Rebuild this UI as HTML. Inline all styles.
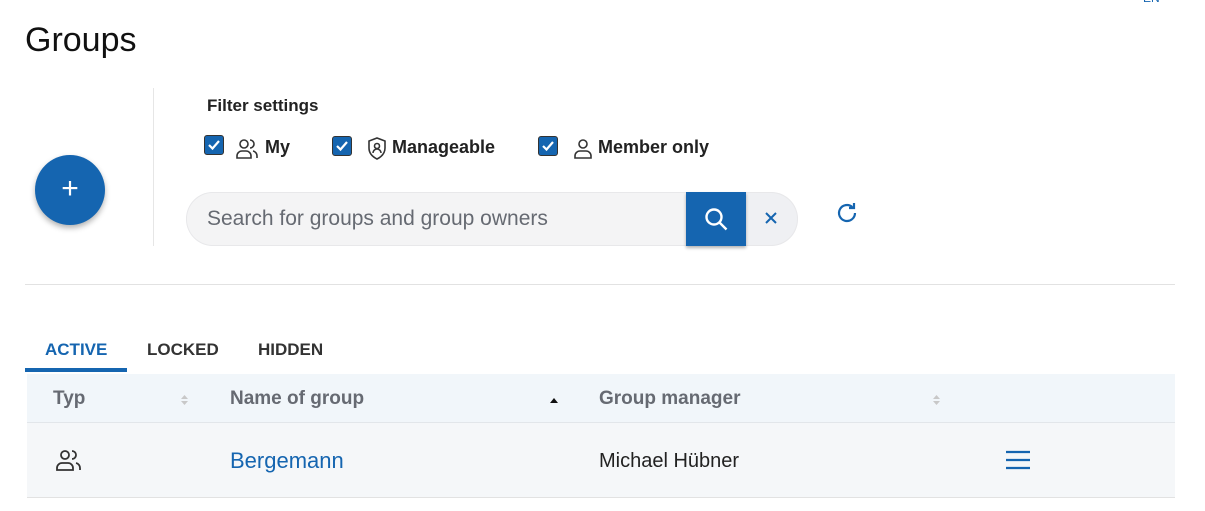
<!DOCTYPE html>
<html><head><meta charset="utf-8"><style>
body{margin:0;width:1205px;height:511px;background:#fff;font-family:"Liberation Sans",sans-serif;position:relative;overflow:hidden;color:#222}
.a{position:absolute}
.cb{position:absolute;width:20px;height:20px;background:#1565b0;border:1px solid #333;border-radius:3px;box-sizing:border-box}
.lbl{position:absolute;font-size:18px;font-weight:bold;color:#222;top:137px}
</style></head><body>
<div class="a" style="left:1143px;top:-9px;font-size:12px;color:#1565b0">EN</div>
<div class="a" style="left:25px;top:21px;font-size:34px;color:#111">Groups</div>
<div class="a" style="left:153px;top:88px;width:1px;height:158px;background:#e6e6e6"></div>
<div class="a" style="left:35px;top:155px;width:70px;height:70px;border-radius:50%;background:#1565b0;box-shadow:0 3px 6px rgba(0,0,0,.3);color:#fff;font-size:30px;text-align:center;line-height:68px">+</div>
<div class="a" style="left:207px;top:96px;font-size:17px;font-weight:bold">Filter settings</div>
<div class="cb" style="left:204px;top:135px"><svg width="18" height="18" viewBox="0 0 18 18"><path d="M4 9l3.5 3.5L14 5" stroke="#fff" stroke-width="2.2" fill="none"/></svg></div>
<svg class="a" style="left:235px;top:138px" width="26" height="22" viewBox="0 0 26 22" fill="none" stroke="#333" stroke-width="1.6"><circle cx="9" cy="6" r="4"/><path d="M2 20v-2a5 5 0 015-5h4a5 5 0 015 5v2zM15 2a4 4 0 010 8M18 13a5 5 0 014 5v2"/></svg>
<div class="lbl" style="left:265px">My</div>
<div class="cb" style="left:332px;top:136px"><svg width="18" height="18" viewBox="0 0 18 18"><path d="M4 9l3.5 3.5L14 5" stroke="#fff" stroke-width="2.2" fill="none"/></svg></div>
<svg class="a" style="left:367px;top:136px" width="20" height="26" viewBox="0 0 20 26" fill="none" stroke="#333" stroke-width="1.6"><path d="M10 2l8 3v7c0 6-4 9-8 11-4-2-8-5-8-11V5z"/><circle cx="10" cy="10" r="2.5"/><path d="M6 17a4 4 0 018 0"/></svg>
<div class="lbl" style="left:392px">Manageable</div>
<div class="cb" style="left:538px;top:136px"><svg width="18" height="18" viewBox="0 0 18 18"><path d="M4 9l3.5 3.5L14 5" stroke="#fff" stroke-width="2.2" fill="none"/></svg></div>
<svg class="a" style="left:572px;top:138px" width="22" height="22" viewBox="0 0 22 22" fill="none" stroke="#333" stroke-width="1.6"><circle cx="11" cy="6" r="4"/><path d="M3 20v-2a5 5 0 015-5h6a5 5 0 015 5v2z"/></svg>
<div class="lbl" style="left:598px">Member only</div>
<div class="a" style="left:186px;top:192px;width:612px;height:54px;border-radius:27px;background:#eff0f3;box-shadow:inset 0 0 0 1px #e8e8ea"></div>
<div class="a" style="left:187px;top:193px;width:500px;height:52px;border-radius:26px 0 0 26px;background:#f4f4f5"></div>
<div class="a" style="left:207px;top:207px;font-size:21px;color:#666a72">Search for groups and group owners</div>
<div class="a" style="left:686px;top:192px;width:60px;height:54px;background:#1565b0;box-shadow:0 2px 3px rgba(0,0,0,.3)"><svg style="margin:15px 0 0 18px" width="26" height="26" viewBox="0 0 26 26" fill="none" stroke="#fff" stroke-width="2.4"><circle cx="10" cy="10" r="7.5"/><path d="M15.5 15.5l7 7"/></svg></div>
<svg class="a" style="left:764px;top:211px" width="14" height="14" viewBox="0 0 14 14" stroke="#1565b0" stroke-width="2"><path d="M2 2l10 10M12 2L2 12"/></svg>
<svg class="a" style="left:835px;top:201px" width="24" height="24" viewBox="0 0 24 24" fill="none" stroke="#1565b0" stroke-width="2.2"><path d="M20 12a8 8 0 11-2.6-5.9"/><path d="M19 2v5h-5" /></svg>
<div class="a" style="left:25px;top:284px;width:1150px;height:1px;background:#e2e2e2"></div>
<div class="a" style="left:45px;top:340px;font-size:17px;font-weight:bold;color:#1565b0">ACTIVE</div>
<div class="a" style="left:147px;top:340px;font-size:17px;font-weight:bold;color:#333">LOCKED</div>
<div class="a" style="left:258px;top:340px;font-size:17px;font-weight:bold;color:#333">HIDDEN</div>
<div class="a" style="left:25px;top:368px;width:102px;height:4px;background:#1565b0"></div>
<div class="a" style="left:27px;top:374px;width:1148px;height:48px;background:#f1f6fa;border-bottom:1px solid #e2e6ea"></div>
<div class="a" style="left:53px;top:388px;font-size:19px;font-weight:bold;color:#666a72">Typ</div>
<div class="a" style="left:230px;top:388px;font-size:19px;font-weight:bold;color:#666a72">Name of group</div>
<div class="a" style="left:599px;top:388px;font-size:19px;font-weight:bold;color:#666a72">Group manager</div>
<svg class="a" style="left:180px;top:393px" width="9" height="14"><path d="M1 6l3.5-4 3.5 4zM1 8l3.5 4 3.5-4z" fill="#c8c8c8"/></svg>
<svg class="a" style="left:549px;top:396px" width="10" height="8"><path d="M1 7l4-5 4 5z" fill="#111"/></svg>
<svg class="a" style="left:932px;top:393px" width="9" height="14"><path d="M1 6l3.5-4 3.5 4zM1 8l3.5 4 3.5-4z" fill="#c8c8c8"/></svg>
<div class="a" style="left:27px;top:423px;width:1148px;height:74px;background:#f5f7f9;border-bottom:1px solid #e2e2e2"></div>
<svg class="a" style="left:55px;top:449px" width="28" height="24" viewBox="0 0 28 24" fill="none" stroke="#333" stroke-width="1.8"><circle cx="10" cy="6" r="4"/><path d="M2 21v-2a5 5 0 015-5h6a5 5 0 015 5v2zM17 2a4 4 0 010 8M21 14a5 5 0 014 5v2"/></svg>
<div class="a" style="left:230px;top:448px;font-size:22px;color:#1565b0">Bergemann</div>
<div class="a" style="left:599px;top:450px;font-size:20px;color:#222">Michael Hübner</div>
<svg class="a" style="left:1005px;top:450px" width="26" height="20" stroke="#1565b0" stroke-width="2.2"><path d="M1 2h24M1 10h24M1 18h24"/></svg>
</body></html>
